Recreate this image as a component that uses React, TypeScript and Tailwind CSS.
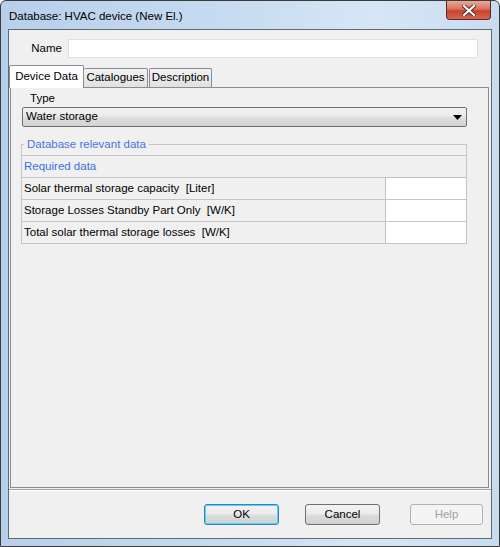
import React from 'react';

const font = { fontFamily: '"Liberation Sans", Arial, sans-serif' };

const rows = [
  { label: 'Solar thermal storage capacity', unit: '[Liter]' },
  { label: 'Storage Losses Standby Part Only', unit: '[W/K]' },
  { label: 'Total solar thermal storage losses', unit: '[W/K]' },
];

const CloseButton: React.FC = () => (
  <div className="absolute right-[8px] top-0 flex h-[19px] w-[45px] items-center justify-center rounded-b-[4px] border border-t-0 border-[#5b2a24] bg-[linear-gradient(to_bottom,#e9a99a_0%,#d9705e_45%,#c7432c_55%,#d8674e_100%)]">
    <svg width="14" height="11" viewBox="0 0 14 11">
      <path d="M2 1 L12 10 M12 1 L2 10" stroke="#4a2a28" strokeWidth="4" strokeLinecap="square" />
      <path d="M2 1 L12 10 M12 1 L2 10" stroke="#ffffff" strokeWidth="2.2" strokeLinecap="square" />
    </svg>
  </div>
);

const Button: React.FC<{ label: string; variant?: 'default' | 'disabled' | 'normal' }> = ({ label, variant = 'normal' }) => {
  if (variant === 'disabled') {
    return (
      <div className="flex h-[21px] w-[73px] items-center justify-center rounded-[3px] border border-[#adb2b5] bg-[#f4f4f4] text-[11.5px] text-[#a0a0a0]">
        {label}
      </div>
    );
  }
  return (
    <div
      className={`flex h-[21px] w-[75px] items-center justify-center rounded-[3px] border text-[11.5px] text-black bg-[linear-gradient(to_bottom,#f2f2f2_0%,#ebebeb_48%,#dddddd_52%,#cfcfcf_100%)] ${
        variant === 'default' ? 'border-[#3c7fb1] shadow-[inset_0_0_0_1px_#48d8fb]' : 'border-[#707070]'
      }`}
    >
      {label}
    </div>
  );
};

export default function App() {
  return (
    <div
      className="relative flex h-[547px] w-[500px] flex-col overflow-hidden rounded-t-[6px] border border-[#3b3b3b] bg-[linear-gradient(to_right,#b7cfea_0%,#c4daf0_40%,#d6e6f6_75%,#c8dcf0_100%)] pb-[7px] pl-[7px] pr-[7px] pt-[28px]"
      style={font}
    >
      {/* title */}
      <div className="absolute left-[8px] top-[7px] text-[11.5px] leading-[16px] text-black">
        Database: HVAC device (New El.)
      </div>
      <CloseButton />

      {/* client area */}
      <div className="flex flex-1 flex-col border border-[#5e6a78] bg-[#f0f0f0]">
        {/* name row */}
        <div className="mt-[9px] flex h-[19px] items-center">
          <span className="w-[53px] text-right text-[11.5px] text-black">Name</span>
          <div className="ml-[6px] h-[19px] w-[410px] border border-[#dde1e6] bg-white" />
        </div>

        {/* tabs */}
        <div className="mt-[8px] flex h-[21px] items-end">
          <div className="relative z-10 -mb-px flex h-[23px] w-[75px] items-center justify-center rounded-t-[2px] border border-b-0 border-[#898c95] bg-white text-[11.5px]">
            Device Data
          </div>
          <div className="flex h-[19px] w-[64px] items-center justify-center rounded-t-[2px] border border-b-0 border-l-0 border-[#898c95] bg-[linear-gradient(to_bottom,#f2f2f2,#e1e1e1)] text-[11.5px]">
            Catalogues
          </div>
          <div className="ml-px flex h-[19px] w-[63px] items-center justify-center rounded-t-[2px] border border-b-0 border-[#898c95] bg-[linear-gradient(to_bottom,#f2f2f2,#e1e1e1)] text-[11.5px]">
            Description
          </div>
        </div>

        {/* tab panel */}
        <div className="ml-[1px] mr-[2px] flex h-[401px] flex-col border border-[#898c95] bg-[#f0f0f0] pl-[11px] pr-[21px]">
          <div className="mt-[3px] pl-[8px] text-[11.5px] leading-[14px] text-black">Type</div>
          <div className="mt-[2px] flex h-[20px] items-center justify-between rounded-[2px] border border-[#707070] bg-[linear-gradient(to_bottom,#f2f2f2_0%,#ebebeb_45%,#dddddd_55%,#d3d3d3_100%)] pl-[3px] pr-[4px] text-[11.5px]">
            <span>Water storage</span>
            <svg width="9" height="5" viewBox="0 0 9 5">
              <path d="M0 0 H9 L4.5 5 Z" fill="#000" />
            </svg>
          </div>

          {/* group */}
          <div className="relative mt-[17px] -ml-px h-[11px] border-l border-r border-t border-[#c4c4c4]">
            <span className="absolute -top-[8px] left-[2px] bg-[#f0f0f0] px-[3px] text-[11.5px] leading-[14px] text-[#4b72e0]">
              Database relevant data
            </span>
          </div>
          <div className="-ml-px border-l border-t border-[#c4c4c4]">
            <div className="flex h-[22px] items-center border-b border-r border-[#c4c4c4] pl-[2px] text-[11.5px] text-[#3d6ee0]">
              Required data
            </div>
            {rows.map((r) => (
              <div key={r.label} className="flex h-[22px] border-b border-[#c4c4c4]">
                <div className="flex flex-1 items-center border-r border-[#c4c4c4] pl-[2px] text-[11.5px] text-black">
                  {r.label}&nbsp;&nbsp;{r.unit}
                </div>
                <div className="w-[81px] border-r border-[#c4c4c4] bg-white" />
              </div>
            ))}
          </div>
        </div>

        {/* bottom buttons */}
        <div className="mt-[1px] flex flex-1 items-start border-t border-[#a0a0a0] pt-[14px] shadow-[inset_0_1px_0_#ffffff]">
          <div className="ml-[195px] flex gap-[26px]">
            <Button label="OK" variant="default" />
            <Button label="Cancel" />
            <div className="ml-[4px]">
              <Button label="Help" variant="disabled" />
            </div>
          </div>
        </div>
      </div>
    </div>
  );
}
